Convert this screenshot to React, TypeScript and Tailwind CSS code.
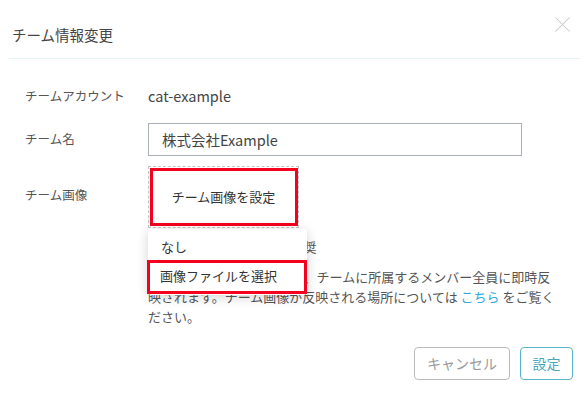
import { X } from 'lucide-react';

export default function App() {
  return (
    <div className="relative w-[588px] h-[393px] bg-white text-[#555] font-['Noto_Sans_CJK_JP','Noto_Sans',sans-serif] overflow-hidden">
      {/* Header */}
      <div className="mx-2 h-[59px] flex items-start justify-between border-b border-[#e6f3f3]">
        <h2 className="pl-1 pt-[24px] text-[14.5px] leading-[22px] text-[#444]">チーム情報変更</h2>
        <button className="mt-[11px] mr-[4px] text-[#c8c8c8]">
          <X className="w-[27px] h-[27px]" strokeWidth={0.9} />
        </button>
      </div>

      {/* Body */}
      <div className="pl-[25px] pt-[25px] flex flex-col text-[13px]">
        <div className="flex items-center h-[24px]">
          <span className="w-[123px] text-[12.5px] text-[#555]">チームアカウント</span>
          <span className="text-[14.5px] text-[#444]">cat-example</span>
        </div>

        <div className="flex items-center mt-[15px]">
          <span className="w-[123px] text-[12.5px] text-[#555]">チーム名</span>
          <div className="w-[374px] h-[33px] border border-[#aab0b8] flex items-center px-[13px] text-[14.5px] text-[#444]">
            株式会社Example
          </div>
        </div>

        <div className="flex mt-[10px]">
          <span className="w-[123px] pt-[20px] text-[12.5px] text-[#555]">チーム画像</span>
          <div className="flex flex-col">
            <div className="relative w-[151px] h-[62px] border border-dashed border-[#c4c4c4] flex items-center justify-center">
              <span className="text-[13px] text-[#333]">チーム画像を設定</span>
              <div className="absolute left-[1px] right-0 top-[1px] bottom-[1px] border-[3px] border-[#f5001e]" />
            </div>

            <div className="relative w-[420px] pt-[9px] text-[13px] leading-[20px] text-[#555]">
              <p>画像は正方形のサイズを推奨</p>
              <p className="mt-[10px]">
                チーム画像を変更した場合、チームに所属するメンバー全員に即時反
                <br />
                映されます。チーム画像が反映される場所については <span className="text-[#30a8db]">こちら</span> をご覧く
                <br />
                ださい。
              </p>

              {/* Dropdown menu */}
              <div className="absolute left-0 top-[1px] w-[159px] bg-white rounded-[4px] shadow-[0_2px_12px_rgba(0,0,0,0.18)] py-[4px] text-[13px] text-[#333]">
                <div className="h-[28px] flex items-center pl-[13px]">なし</div>
                <div className="relative h-[30px] flex items-center pl-[12px]">
                  画像ファイルを選択
                  <div className="absolute -left-[1px] right-0 top-[-1px] bottom-[-3px] border-[3px] border-[#f5001e]" />
                </div>
              </div>
            </div>
          </div>
        </div>
      </div>

      {/* Footer */}
      <div className="absolute right-[15px] bottom-[13px] flex gap-[10px]">
        <button className="w-[96px] h-[33px] rounded-[4px] border border-[#bbb] text-[14px] text-[#999]">キャンセル</button>
        <button className="w-[53px] h-[33px] rounded-[4px] border border-[#5ab4c8] text-[14px] text-[#4aa6ba]">設定</button>
      </div>
    </div>
  );
}
